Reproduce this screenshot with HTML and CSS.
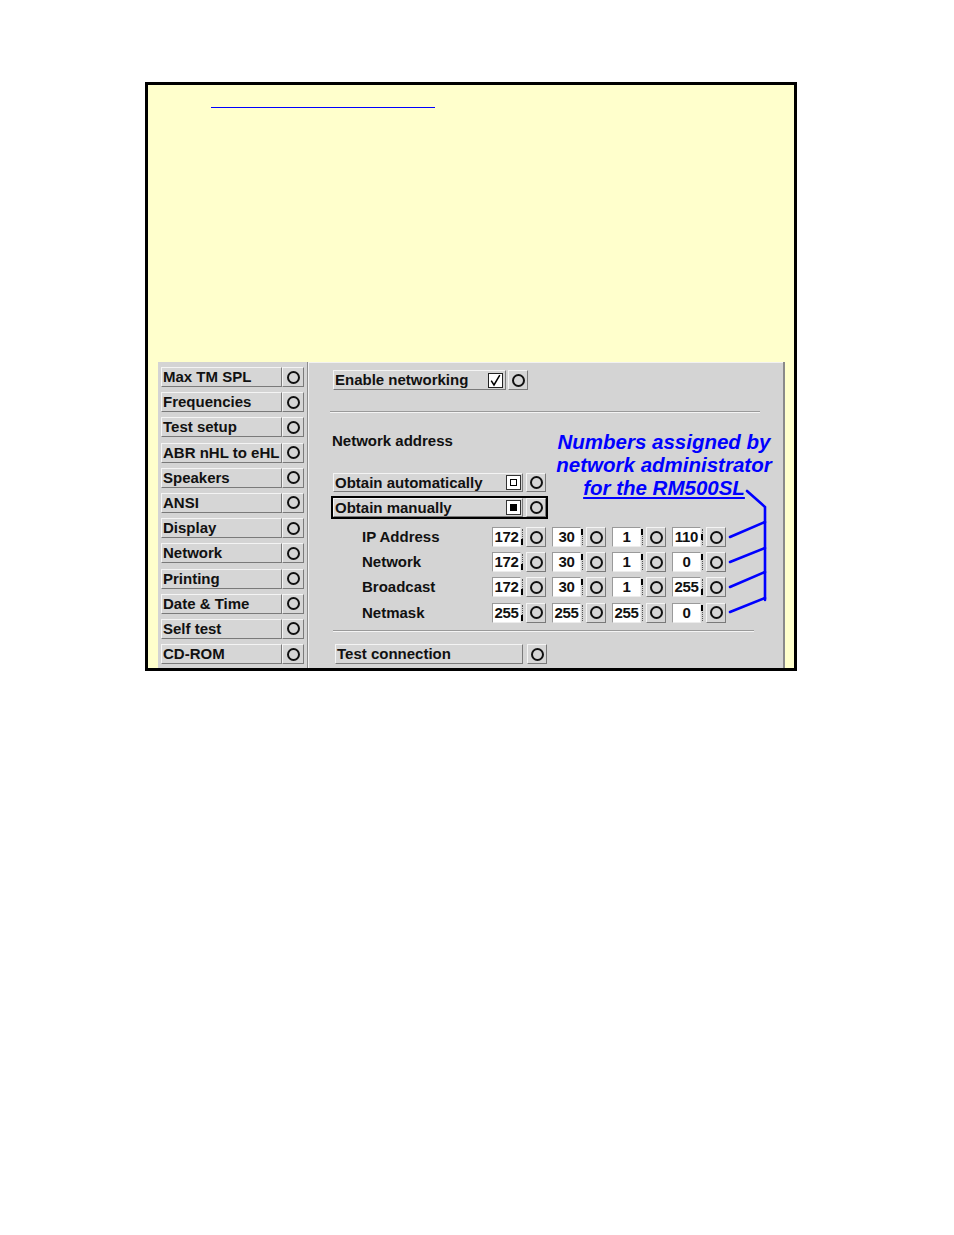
FILE: index.html
```html
<!DOCTYPE html>
<html>
<head>
<meta charset="utf-8">
<link rel="stylesheet" href="styles.css">
</head>
<body>
<div class="page">
  <div class="frame">
    <div class="title-rule"></div>
    <div class="panel">
      <div class="nav">
        <div class="nav-row"><div class="btn nav-btn">Max TM SPL</div><div class="cbtn nav-c"><span class="ring"></span></div></div>
        <div class="nav-row"><div class="btn nav-btn">Frequencies</div><div class="cbtn nav-c"><span class="ring"></span></div></div>
        <div class="nav-row"><div class="btn nav-btn">Test setup</div><div class="cbtn nav-c"><span class="ring"></span></div></div>
        <div class="nav-row"><div class="btn nav-btn">ABR nHL to eHL</div><div class="cbtn nav-c"><span class="ring"></span></div></div>
        <div class="nav-row"><div class="btn nav-btn">Speakers</div><div class="cbtn nav-c"><span class="ring"></span></div></div>
        <div class="nav-row"><div class="btn nav-btn">ANSI</div><div class="cbtn nav-c"><span class="ring"></span></div></div>
        <div class="nav-row"><div class="btn nav-btn">Display</div><div class="cbtn nav-c"><span class="ring"></span></div></div>
        <div class="nav-row"><div class="btn nav-btn">Network</div><div class="cbtn nav-c"><span class="ring"></span></div></div>
        <div class="nav-row"><div class="btn nav-btn">Printing</div><div class="cbtn nav-c"><span class="ring"></span></div></div>
        <div class="nav-row"><div class="btn nav-btn">Date &amp; Time</div><div class="cbtn nav-c"><span class="ring"></span></div></div>
        <div class="nav-row"><div class="btn nav-btn">Self test</div><div class="cbtn nav-c"><span class="ring"></span></div></div>
        <div class="nav-row"><div class="btn nav-btn">CD-ROM</div><div class="cbtn nav-c"><span class="ring"></span></div></div>
      </div>

      <div class="content">
        <div class="row enable-row">
          <div class="btn enable-btn">Enable networking
            <svg class="ind" width="15" height="15" viewBox="0 0 15 15"><rect x="0.5" y="0.5" width="14" height="14" fill="#fff" stroke="#222"/><path d="M3.2 7.6 L6 12 L11.8 2.2" fill="none" stroke="#000" stroke-width="1.5"/></svg>
          </div>
          <div class="cbtn"><span class="ring"></span></div>
        </div>
        <div class="groove groove-1"></div>
        <div class="heading">Network address</div>
        <div class="opt opt-auto">
          <div class="btn opt-btn">Obtain automatically
            <svg class="ind" width="15" height="15" viewBox="0 0 15 15"><rect x="0.5" y="0.5" width="14" height="14" fill="#fff" stroke="#333"/><rect x="4.5" y="4.5" width="6" height="6" fill="none" stroke="#000"/></svg>
          </div>
          <div class="cbtn"><span class="ring"></span></div>
        </div>
        <div class="opt opt-focus">
          <div class="btn opt-btn">Obtain manually
            <svg class="ind" width="15" height="15" viewBox="0 0 15 15"><rect x="0.5" y="0.5" width="14" height="14" fill="#fff" stroke="#333"/><rect x="4" y="4" width="7" height="7" fill="#000"/></svg>
          </div>
          <div class="cbtn"><span class="ring"></span></div>
        </div>

        <div class="addr">
          <div class="addr-row">
            <span class="addr-label">IP Address</span>
            <div class="oct"><span class="field">172</span><span class="sep bot"></span><div class="cbtn"><span class="ring"></span></div></div>
            <div class="oct"><span class="field">30</span><span class="sep top"></span><div class="cbtn"><span class="ring"></span></div></div>
            <div class="oct"><span class="field">1</span><span class="sep top"></span><div class="cbtn"><span class="ring"></span></div></div>
            <div class="oct"><span class="field">110</span><span class="sep mid"></span><div class="cbtn"><span class="ring"></span></div></div>
          </div>
          <div class="addr-row">
            <span class="addr-label">Network</span>
            <div class="oct"><span class="field">172</span><span class="sep bot"></span><div class="cbtn"><span class="ring"></span></div></div>
            <div class="oct"><span class="field">30</span><span class="sep top"></span><div class="cbtn"><span class="ring"></span></div></div>
            <div class="oct"><span class="field">1</span><span class="sep top"></span><div class="cbtn"><span class="ring"></span></div></div>
            <div class="oct"><span class="field">0</span><span class="sep top"></span><div class="cbtn"><span class="ring"></span></div></div>
          </div>
          <div class="addr-row">
            <span class="addr-label">Broadcast</span>
            <div class="oct"><span class="field">172</span><span class="sep bot"></span><div class="cbtn"><span class="ring"></span></div></div>
            <div class="oct"><span class="field">30</span><span class="sep top"></span><div class="cbtn"><span class="ring"></span></div></div>
            <div class="oct"><span class="field">1</span><span class="sep top"></span><div class="cbtn"><span class="ring"></span></div></div>
            <div class="oct"><span class="field">255</span><span class="sep bot"></span><div class="cbtn"><span class="ring"></span></div></div>
          </div>
          <div class="addr-row">
            <span class="addr-label">Netmask</span>
            <div class="oct"><span class="field">255</span><span class="sep bot"></span><div class="cbtn"><span class="ring"></span></div></div>
            <div class="oct"><span class="field">255</span><span class="sep"></span><div class="cbtn"><span class="ring"></span></div></div>
            <div class="oct"><span class="field">255</span><span class="sep"></span><div class="cbtn"><span class="ring"></span></div></div>
            <div class="oct"><span class="field">0</span><span class="sep top"></span><div class="cbtn"><span class="ring"></span></div></div>
          </div>
        </div>

        <div class="groove groove-2"></div>
        <div class="row test-row">
          <div class="btn test-btn">Test connection</div>
          <div class="cbtn"><span class="ring"></span></div>
        </div>

        <div class="note">Numbers assigned by<br>network administrator<br><span class="note-u">for the RM500SL</span></div>
        <svg class="bracket" width="470" height="260" viewBox="0 0 470 260">
          <g fill="none" stroke="#0000ff" stroke-width="2.6" stroke-linecap="round">
            <path d="M438 128 L456 144 L456 237"/>
            <path d="M421 174 L456 159"/>
            <path d="M421 199 L456 185"/>
            <path d="M421 224 L456 209"/>
            <path d="M421 249 L456 235"/>
          </g>
        </svg>
      </div>
    </div>
  </div>
</div>
</body>
</html>
```

FILE: styles.css
```css
html, body {
  margin: 0;
  padding: 0;
  background: #ffffff;
}

.page {
  padding: 82px 0 0 145px;
}

.frame {
  box-sizing: border-box;
  width: 652px;
  height: 589px;
  border: 3px solid #000;
  background: #ffffcc;
  overflow: hidden;
}

.title-rule {
  margin: 22px 0 0 63px;
  width: 224px;
  height: 1px;
  background: #0000ff;
}

.panel {
  margin: 254px 0 0 10px;
  width: 627px;
  height: 306px;
  box-sizing: border-box;
  display: flex;
  background: #d4d4d4;
  border-right: 2px solid #8a8a8a;
  font-family: "Liberation Sans", Arial, sans-serif;
  font-weight: bold;
  font-size: 15px;
  color: #111;
}

/* left navigation */
.nav {
  box-sizing: border-box;
  width: 150px;
  padding: 5px 0 0 3px;
  border-right: 1px solid #8c8c8c;
  display: flex;
  flex-direction: column;
  gap: 5.2px;
}

.nav-row {
  display: flex;
  height: 20px;
}

.btn {
  box-sizing: border-box;
  height: 20px;
  background: #d6d6d6;
  border-top: 1px solid #f4f4f4;
  border-left: 1px solid #f4f4f4;
  border-bottom: 1px solid #7a7a7a;
  border-right: 1px solid #7a7a7a;
  line-height: 18px;
  padding-left: 1px;
  white-space: nowrap;
  display: flex;
  align-items: center;
  justify-content: space-between;
}

.nav-btn {
  width: 121px;
}

.cbtn {
  box-sizing: border-box;
  width: 20px;
  height: 20px;
  background: #d6d6d6;
  border-top: 1px solid #f4f4f4;
  border-left: 1px solid #f4f4f4;
  border-bottom: 1px solid #7a7a7a;
  border-right: 1px solid #7a7a7a;
  display: flex;
  align-items: center;
  justify-content: center;
  flex: none;
}

.nav-c {
  width: 22px;
}

.ring {
  box-sizing: border-box;
  width: 13px;
  height: 13px;
  border: 2px solid #111;
  border-radius: 50%;
}

/* right content */
.content {
  position: relative;
  flex: 1;
  box-sizing: border-box;
  border-left: 1px solid #f2f2f2;
  border-top: 1px solid #f2f2f2;
  padding: 7px 0 0 24px;
  display: flex;
  flex-direction: column;
  align-items: flex-start;
}

.row {
  display: flex;
  height: 20px;
}

.enable-btn {
  width: 173px;
  padding-right: 2px;
}

.enable-row .cbtn {
  margin-left: 2px;
}

.ind {
  display: block;
  flex: none;
}

.groove {
  height: 0;
  border-top: 1px solid #9a9a9a;
  border-bottom: 1px solid #f4f4f4;
}

.groove-1 {
  margin: 21px 0 0 -3px;
  width: 430px;
}

.heading {
  margin-top: 19px;
  line-height: 18px;
  margin-left: -1px;
}

.opt {
  display: flex;
  border: 2px solid transparent;
  margin-left: -2px;
  height: 19px;
}

.opt-auto {
  margin-top: 21px;
}

.opt-focus {
  margin-top: 2px;
  border-color: #000;
}

.opt .btn,
.opt .cbtn {
  height: 19px;
}

.opt-btn {
  width: 190px;
  padding-right: 1px;
}

.opt .cbtn {
  margin-left: 3px;
}

/* address rows */
.addr {
  margin-top: 8px;
  display: flex;
  flex-direction: column;
  gap: 5.2px;
}

.addr-row {
  display: flex;
  height: 20px;
  padding-left: 29px;
  align-items: center;
}

.addr-label {
  width: 130px;
  line-height: 18px;
}

.oct {
  display: flex;
  margin-right: 6px;
}

.field {
  box-sizing: border-box;
  width: 29px;
  height: 20px;
  background: #fff;
  border-top: 1px solid #9a9a9a;
  border-left: 1px solid #9a9a9a;
  border-bottom: 1px solid #ececec;
  border-right: 1px solid #ececec;
  text-align: center;
  line-height: 18px;
  letter-spacing: -0.3px;
}

.sep {
  position: relative;
  width: 4px;
  height: 20px;
  margin-right: 1px;
}

.sep::before {
  content: "";
  position: absolute;
  left: 1px;
  top: 2px;
  bottom: 2px;
  border-left: 1px dotted #555;
}

.sep.top::after,
.sep.mid::after,
.sep.bot::after {
  content: "";
  position: absolute;
  left: 0;
  width: 2px;
  height: 6px;
  background: #000;
}

.sep.top::after { top: 2px; }
.sep.mid::after { top: 7px; }
.sep.bot::after { bottom: 2px; }

.groove-2 {
  margin-top: 7.4px;
  width: 421px;
}

.test-row {
  margin: 12.4px 0 0 2px;
}

.test-btn {
  width: 188px;
}

.test-row .cbtn {
  margin-left: 4px;
}

/* annotation */
.note {
  position: absolute;
  left: 240px;
  top: 67px;
  width: 230px;
  text-align: center;
  color: #0000ff;
  font-style: italic;
  font-weight: bold;
  font-size: 20.5px;
  line-height: 23px;
  white-space: nowrap;
}

.note-u {
  text-decoration: underline;
}

.bracket {
  position: absolute;
  left: 0;
  top: 0;
  pointer-events: none;
}
```
